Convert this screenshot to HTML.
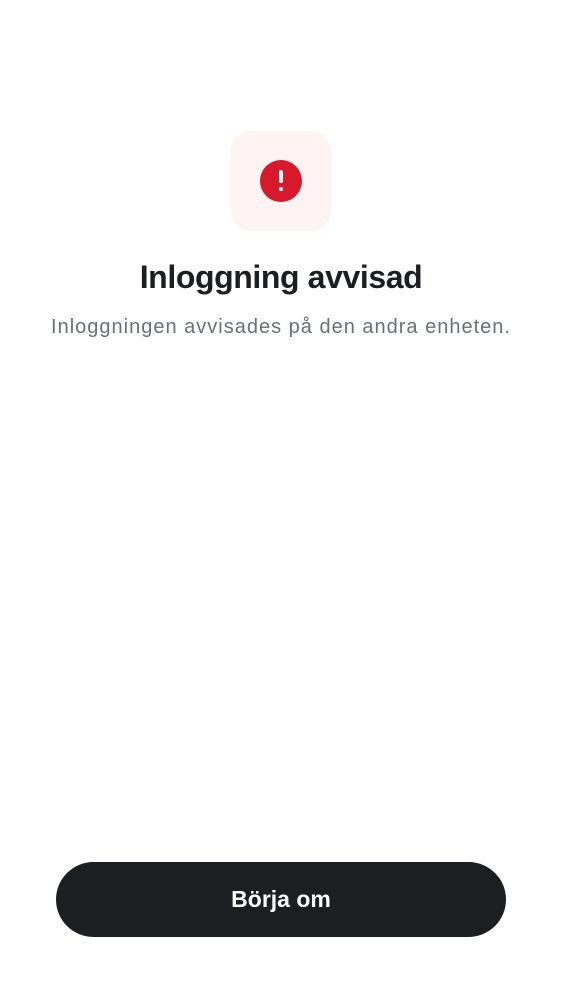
<!DOCTYPE html>
<html><head><meta charset="utf-8"><style>
html,body{margin:0;padding:0;background:#fff;width:562px;height:1000px;overflow:hidden;font-family:"Liberation Sans",sans-serif;}
.box{position:absolute;left:231px;top:131px;width:100px;height:100px;border-radius:20px;background:#fff4f3;}
.c{position:absolute;left:260px;top:160px;width:42px;height:42px;border-radius:50%;background:#d61a2c;}
.bar{position:absolute;left:19px;top:10px;width:4px;height:13px;border-radius:2px;background:#fff;}
.dot{position:absolute;left:19px;top:27px;width:4px;height:4px;border-radius:2px;background:#fff;}
h1{position:absolute;top:259px;left:0;width:562px;margin:0;text-align:center;font-size:32px;font-weight:bold;color:#1d1e22;letter-spacing:-0.4px;}
p{position:absolute;top:316px;left:0;width:562px;margin:0;text-align:center;font-size:20px;color:#6b6f78;letter-spacing:1px;}
.btn{position:absolute;left:56px;top:862px;width:450px;height:75px;border-radius:38px;background:#1d1e22;color:#fff;font-size:23px;font-weight:bold;text-align:center;line-height:75px;}
</style></head><body>
<div class="box"></div>
<div class="c"><div class="bar"></div><div class="dot"></div></div>
<h1>Inloggning avvisad</h1>
<p>Inloggningen avvisades på den andra enheten.</p>
<div class="btn">Börja om</div>
</body></html>
